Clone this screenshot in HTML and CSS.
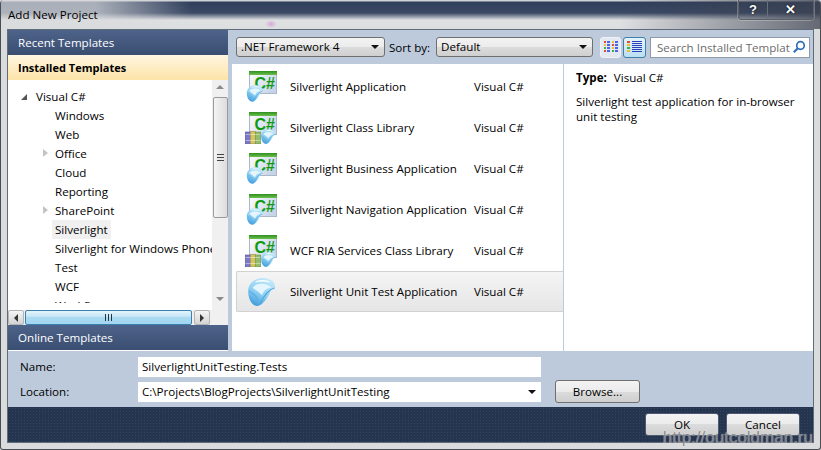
FILE: index.html

```html
<!DOCTYPE html>
<html lang="en">
<head>
    <meta charset="UTF-8">
    <title>Add New Project</title>
    <link rel="stylesheet" href="styles.css">
</head>
<body>
    <svg class="icon-defs" width="0" height="0">
        <defs>
            <linearGradient id="blob-fill" x1="0.7" y1="0" x2="0.2" y2="1">
                <stop offset="0" stop-color="#c4e9fa"/>
                <stop offset="0.55" stop-color="#8ccff1"/>
                <stop offset="1" stop-color="#3a98dc"/>
            </linearGradient>
            <linearGradient id="win-fill" x1="0" y1="0" x2="1" y2="0.6">
                <stop offset="0" stop-color="#ffffff"/>
                <stop offset="1" stop-color="#c6d4ea"/>
            </linearGradient>
            <linearGradient id="win-bar" x1="0" y1="0" x2="0" y2="1">
                <stop offset="0" stop-color="#2f8f22"/>
                <stop offset="1" stop-color="#6cc04c"/>
            </linearGradient>
            <symbol id="blob" viewBox="0 0 30 30">
                <path d="M2 14C2 6 10 1 18 2c6 1 10 4 9 8l-3 2c-2 6-7 14-12 16C6 29 2 22 2 14z" fill="url(#blob-fill)"/>
                <path d="M6 11c4-5 13-5 18 0-4 0-7 2-9 7-3-3-6-5-9-7z" fill="#e4f5fd"/>
                <path d="M8 6c4-3 11-3 15 0-5-1-10-1-15 0z" fill="#ffffff"/>
                <path d="M3 14c4 2 8 6 10 13" fill="none" stroke="#5aaee4" stroke-width="1"/>
                <path d="M13 26c3-6 7-13 14-15" fill="none" stroke="#4aa4e0" stroke-width="1"/>
            </symbol>
            <symbol id="window" viewBox="0 0 28 23">
                <rect x="0.5" y="0.5" width="27" height="22" fill="url(#win-fill)" stroke="#a9b7c9"/>
                <rect x="0" y="0" width="28" height="4" fill="url(#win-bar)"/>
                <text x="26" y="18" class="icon-cs" text-anchor="end">C#</text>
            </symbol>
            <symbol id="books" viewBox="0 0 16 13">
                <rect x="0.3" y="1" width="5" height="11.7" fill="#7a78c8" stroke="#55539c" stroke-width="0.6"/>
                <rect x="5.5" y="0.3" width="5" height="12.4" fill="#d4c560" stroke="#a39440" stroke-width="0.6"/>
                <rect x="10.7" y="1" width="5" height="11.7" fill="#93bd6c" stroke="#6a9448" stroke-width="0.6"/>
                <path d="M0.5 3.5h15M0.5 9.5h15" stroke="#ffffff" stroke-width="0.7" opacity="0.6"/>
            </symbol>
            <symbol id="app-icon" viewBox="0 0 34 34">
                <use href="#window" x="5" y="1" width="28" height="23"/>
                <use href="#blob" x="1" y="14" width="20" height="19"/>
            </symbol>
            <symbol id="lib-icon" viewBox="0 0 34 34">
                <use href="#window" x="5" y="1" width="28" height="23"/>
                <use href="#books" x="1" y="20" width="16" height="13"/>
                <use href="#blob" x="16" y="17" width="17" height="17"/>
            </symbol>
            <symbol id="view-grid" viewBox="0 0 14 14">
                <path d="M0 1h2v2H0z" fill="#e8483a"/>
                <path d="M0 4h2v2H0z" fill="#eec030"/>
                <path d="M0 7h2v2H0z" fill="#45b045"/>
                <path d="M0 10h2v2H0z" fill="#e8483a"/>
                <path d="M3 1h3v2H3zM3 4h3v2H3zM3 7h3v2H3zM3 10h3v2H3z" fill="#4a66e0"/>
                <path d="M8 1h2v2H8z" fill="#eec030"/>
                <path d="M8 4h2v2H8z" fill="#e8483a"/>
                <path d="M8 7h2v2H8z" fill="#eec030"/>
                <path d="M8 10h2v2H8z" fill="#45b045"/>
                <path d="M11 1h3v2h-3zM11 4h3v2h-3zM11 7h3v2h-3zM11 10h3v2h-3z" fill="#4a66e0"/>
            </symbol>
            <symbol id="view-list" viewBox="0 0 16 14">
                <path d="M0 1h3v2H0z" fill="#e8483a"/>
                <path d="M0 4h3v2H0z" fill="#eec030"/>
                <path d="M0 7h3v2H0z" fill="#45b045"/>
                <path d="M0 10h3v2H0z" fill="#eec030"/>
                <path d="M5 1h10v1H5zM5 3h10v1H5zM5 5h10v1H5zM5 7h10v1H5zM5 9h10v1H5zM5 11h10v1H5z" fill="#2a3fb8"/>
            </symbol>
        </defs>
    </svg>

    <div class="window">
        <header class="titlebar">
            <span class="title-text">Add New Project</span>
            <div class="caption-btns">
                <span class="caption-btn">?</span>
                <span class="caption-btn">✕</span>
            </div>
        </header>

        <div class="client">
            <div class="main">
                <aside class="sidebar">
                    <div class="side-head">Recent Templates</div>
                    <div class="side-head side-head-active">Installed Templates</div>
                    <div class="tree-wrap">
                        <ul class="tree">
                            <li class="tree-root"><i class="arrow-open"></i>Visual C#</li>
                            <li>Windows</li>
                            <li>Web</li>
                            <li><i class="arrow-closed"></i>Office</li>
                            <li>Cloud</li>
                            <li>Reporting</li>
                            <li><i class="arrow-closed"></i>SharePoint</li>
                            <li><span class="tree-sel">Silverlight</span></li>
                            <li>Silverlight for Windows Phone</li>
                            <li>Test</li>
                            <li>WCF</li>
                            <li>Workflow</li>
                        </ul>
                        <div class="vscroll">
                            <i class="tri-up"></i>
                            <div class="vthumb"><span class="grip-h"></span></div>
                            <i class="tri-down"></i>
                        </div>
                    </div>
                    <div class="hscroll">
                        <span class="hbtn"><i class="tri-left"></i></span>
                        <div class="hthumb"><span class="grip-v"></span></div>
                        <span class="hbtn"><i class="tri-right"></i></span>
                    </div>
                    <div class="side-head">Online Templates</div>
                </aside>

                <section class="content">
                    <div class="toolbar">
                        <div class="combo combo-fw">.NET Framework 4<i class="tri-combo"></i></div>
                        <span class="sort-label">Sort by:</span>
                        <div class="combo combo-sort">Default<i class="tri-combo"></i></div>
                        <span class="view-btn"><svg width="14" height="14"><use href="#view-grid"/></svg></span>
                        <span class="view-btn view-btn-on"><svg width="16" height="14"><use href="#view-list"/></svg></span>
                        <div class="search">
                            <span class="search-text">Search Installed Templat</span>
                            <svg class="search-icon" width="14" height="14" viewBox="0 0 14 14">
                                <circle cx="8.5" cy="5.5" r="3.8" fill="none" stroke="#2f6fb8" stroke-width="1.7"/>
                                <path d="M5.8 8.3 1.8 12.3" stroke="#2f6fb8" stroke-width="2.2"/>
                            </svg>
                        </div>
                    </div>

                    <div class="panes">
                        <div class="list">
                            <div class="row">
                                <svg class="row-icon"><use href="#app-icon"/></svg>
                                <span class="row-name">Silverlight Application</span>
                                <span class="row-lang">Visual C#</span>
                            </div>
                            <div class="row">
                                <svg class="row-icon"><use href="#lib-icon"/></svg>
                                <span class="row-name">Silverlight Class Library</span>
                                <span class="row-lang">Visual C#</span>
                            </div>
                            <div class="row">
                                <svg class="row-icon"><use href="#app-icon"/></svg>
                                <span class="row-name">Silverlight Business Application</span>
                                <span class="row-lang">Visual C#</span>
                            </div>
                            <div class="row">
                                <svg class="row-icon"><use href="#app-icon"/></svg>
                                <span class="row-name">Silverlight Navigation Application</span>
                                <span class="row-lang">Visual C#</span>
                            </div>
                            <div class="row">
                                <svg class="row-icon"><use href="#lib-icon"/></svg>
                                <span class="row-name">WCF RIA Services Class Library</span>
                                <span class="row-lang">Visual C#</span>
                            </div>
                            <div class="row row-sel">
                                <svg class="row-icon"><use href="#blob"/></svg>
                                <span class="row-name">Silverlight Unit Test Application</span>
                                <span class="row-lang">Visual C#</span>
                            </div>
                        </div>
                        <div class="details">
                            <p class="type-line"><b>Type:</b> Visual C#</p>
                            <p class="desc">Silverlight test application for in-browser unit testing</p>
                        </div>
                    </div>
                </section>
            </div>

            <form class="form">
                <label class="form-label">Name:</label>
                <div class="field">SilverlightUnitTesting.Tests</div>
                <span></span>
                <label class="form-label">Location:</label>
                <div class="field field-combo">C:\Projects\BlogProjects\SilverlightUnitTesting<i class="tri-combo"></i></div>
                <button type="button" class="btn btn-browse">Browse...</button>
            </form>

            <footer class="footer">
                <button type="button" class="btn btn-foot">OK</button>
                <button type="button" class="btn btn-foot">Cancel</button>
            </footer>
        </div>

        <span class="watermark">http://outcoldman.ru</span>
    </div>
</body>
</html>
```

FILE: styles.css

```css
body {
    margin: 0;
    padding: 0;
    font-family: "Open Sans", "Noto Sans", sans-serif;
    font-size: 11.6px;
    color: #000;
    background: #d8dadc;
}

.icon-defs {
    position: absolute;
}

.icon-cs {
    font-family: "Liberation Sans", sans-serif;
    font-weight: bold;
    font-size: 16px;
    fill: #109a10;
}

.window {
    position: relative;
    width: 821px;
    height: 450px;
    box-sizing: border-box;
    padding: 0 6px 6px 6px;
    background: #d9dbdd;
    border: 1px solid #4a4d52;
    border-top: none;
    border-radius: 4px 4px 3px 3px;
    margin: 0;
    overflow: hidden;
    display: flex;
    flex-direction: column;
}

.titlebar {
    height: 29px;
    flex: none;
    margin: 0 -6px;
    padding: 0 6px 0 7px;
    display: flex;
    justify-content: space-between;
    background:
        radial-gradient(ellipse 6px 4px at 270px 24px, #d6a8d8, transparent),
        linear-gradient(to right, rgba(216, 218, 220, 0.72) 0, rgba(216, 218, 220, 0.72) 95px, transparent 190px),
        linear-gradient(to left, rgba(60, 66, 80, 0.75) 0, transparent 200px),
        linear-gradient(to bottom, #cfd2d6 0, #cfd2d6 1px, #2f3e5b 2px, #3c4a66 13px, #dfe0e2 20px, #dcdee0 100%);
}

.title-text {
    line-height: 29px;
}

.caption-btns {
    display: flex;
    height: 19px;
    border: 1px solid #5b6068;
    border-top: none;
    border-radius: 0 0 4px 4px;
    box-shadow: 0 0 0 1px rgba(255, 255, 255, 0.25);
}

.caption-btn {
    width: 28px;
    text-align: center;
    color: #fff;
    font-family: "Liberation Sans", sans-serif;
    font-weight: bold;
    font-size: 13px;
    line-height: 19px;
    text-shadow: 0 0 2px #000;
}

.caption-btn:last-child {
    width: 45px;
    border-left: 1px solid #6a6f78;
}

.client {
    flex: 1;
    border: 1px solid #5f6b78;
    background: #bccadb;
    display: flex;
    flex-direction: column;
    min-height: 0;
}

.main {
    height: 321px;
    flex: none;
    display: flex;
}

.sidebar {
    width: 220px;
    height: 320px;
    flex: none;
    display: flex;
    flex-direction: column;
    background: #fff;
    border-bottom: 1px solid #fff;
}

.side-head {
    height: 25px;
    flex: none;
    box-sizing: border-box;
    padding-left: 10px;
    line-height: 25px;
    color: #fff;
    background: linear-gradient(to bottom, #4e6389, #3a4e72);
}

.side-head-active {
    color: #000;
    font-weight: bold;
    font-size: 11px;
    background: linear-gradient(to bottom, #fff6e0, #fde3a8);
}

.tree-wrap {
    flex: 1;
    display: flex;
    min-height: 0;
}

.tree {
    flex: 1;
    list-style: none;
    margin: 0;
    padding: 7px 0 0 0;
    height: 223px;
    box-sizing: border-box;
    overflow: hidden;
    white-space: nowrap;
}

.tree li {
    position: relative;
    height: 19px;
    line-height: 19px;
    padding-left: 47px;
}

.tree .tree-root {
    padding-left: 28px;
}

.tree-sel {
    display: inline-block;
    margin-left: -3px;
    padding: 0 3px;
    background: #f0f0f0;
}

.arrow-open {
    position: absolute;
    left: 13px;
    top: 7px;
    border-left: 6px solid transparent;
    border-bottom: 6px solid #555;
}

.arrow-closed {
    position: absolute;
    left: 35px;
    top: 5px;
    border-top: 4px solid transparent;
    border-bottom: 4px solid transparent;
    border-left: 5px solid #c4c4c4;
}

.vscroll {
    width: 16px;
    flex: none;
    background: #f0f0f0;
    display: flex;
    flex-direction: column;
    align-items: center;
    box-sizing: border-box;
    padding-top: 5px;
}

.tri-up {
    border-left: 4px solid transparent;
    border-right: 4px solid transparent;
    border-bottom: 4px solid #8a8a8a;
}

.tri-down {
    margin-top: 79px;
    border-left: 4px solid transparent;
    border-right: 4px solid transparent;
    border-top: 4px solid #8a8a8a;
}

.vthumb {
    width: 15px;
    height: 121px;
    box-sizing: border-box;
    margin-top: 8px;
    border: 1px solid #9a9a9a;
    border-radius: 2px;
    background: linear-gradient(to right, #f4f4f4, #dcdcdc);
    display: flex;
    align-items: center;
    justify-content: center;
}

.grip-h {
    width: 7px;
    height: 7px;
    background: repeating-linear-gradient(to bottom, #444 0, #444 1px, #e8e8e8 1px, #e8e8e8 3px);
}

.hscroll {
    height: 15px;
    flex: none;
    display: flex;
    align-items: stretch;
    background: #f0f0f0;
    padding-right: 18px;
}

.hbtn {
    width: 16px;
    flex: none;
    box-sizing: border-box;
    display: flex;
    align-items: center;
    justify-content: center;
    border: 1px solid #b4b4b4;
    border-radius: 2px;
    background: linear-gradient(to bottom, #f4f4f4, #d4d4d4);
}

.tri-left {
    border-top: 4px solid transparent;
    border-bottom: 4px solid transparent;
    border-right: 4px solid #333;
}

.tri-right {
    border-top: 4px solid transparent;
    border-bottom: 4px solid transparent;
    border-left: 4px solid #333;
}

.hthumb {
    flex: 1;
    margin: 0 2px 0 1px;
    border: 1px solid #3c7fb1;
    border-radius: 2px;
    background: linear-gradient(to bottom, #e3f4fc 0, #c4e5f6 45%, #a9daf2 50%, #a2d6f0 100%);
    display: flex;
    align-items: center;
    justify-content: center;
}

.grip-v {
    width: 7px;
    height: 7px;
    background: repeating-linear-gradient(to right, #234 0, #234 1px, transparent 1px, transparent 3px);
}

.content {
    flex: 1;
    margin-left: 4px;
    display: flex;
    flex-direction: column;
    min-width: 0;
}

.toolbar {
    height: 34px;
    flex: none;
    display: flex;
    align-items: center;
    box-sizing: border-box;
    padding: 0 0 0 4px;
}

.combo {
    position: relative;
    box-sizing: border-box;
    height: 20px;
    line-height: 18px;
    padding-left: 4px;
    border: 1px solid #707070;
    border-radius: 3px;
    background: linear-gradient(to bottom, #f3f3f3 0, #ebebeb 50%, #dcdcdc 50%, #cfcfcf 100%);
}

.combo-fw {
    width: 149px;
}

.combo-sort {
    width: 157px;
}

.sort-label {
    width: 51px;
    padding-left: 4px;
    box-sizing: border-box;
}

.tri-combo {
    position: absolute;
    right: 5px;
    top: 7px;
    border-left: 4px solid transparent;
    border-right: 4px solid transparent;
    border-top: 4px solid #111;
}

.view-btn {
    width: 21px;
    height: 21px;
    box-sizing: border-box;
    margin-left: 7px;
    display: flex;
    align-items: center;
    justify-content: center;
    background: #e4e9f1;
    border: 1px solid #eef2f6;
    border-radius: 3px;
}

.view-btn-on {
    width: 23px;
    margin-left: 2px;
    border-color: #3f7fa8;
    background: linear-gradient(to bottom, #e4f3fb, #b9dff4);
}

.search {
    width: 160px;
    height: 21px;
    box-sizing: border-box;
    margin-left: 4px;
    padding-left: 6px;
    display: flex;
    align-items: center;
    justify-content: space-between;
    background: #fff;
    border: 1px solid #8e9aaa;
    overflow: hidden;
}

.search-text {
    color: #6d6d6d;
    white-space: nowrap;
}

.search-icon {
    flex: none;
    margin-right: 3px;
}

.panes {
    flex: 1;
    display: flex;
    background: #fff;
    min-height: 0;
}

.list {
    width: 332px;
    flex: none;
    box-sizing: border-box;
    padding: 2px 0 0 4px;
    border-right: 1px solid #bccadb;
}

.row {
    height: 41px;
    box-sizing: border-box;
    display: flex;
    align-items: center;
    padding-left: 8px;
    white-space: nowrap;
}

.row-icon {
    width: 34px;
    height: 34px;
    flex: none;
}

.row-name {
    width: 184px;
    margin-left: 12px;
    flex: none;
}

.row-sel {
    background: linear-gradient(to bottom, #f4f4f4, #e6e6e6);
    border: 1px solid #d2d2d2;
    border-right: none;
    border-radius: 2px 0 0 2px;
    padding-left: 7px;
}

.row-sel .row-icon {
    width: 32px;
    height: 32px;
    margin-left: 2px;
}

.details {
    flex: 1;
    padding: 6px 12px;
}

.details p {
    margin: 0;
    line-height: 15px;
}

.type-line b {
    margin-right: 4px;
}

.desc {
    margin-top: 9px !important;
}

.form {
    height: 56px;
    flex: none;
    box-sizing: border-box;
    padding: 6px 0 0 12px;
    display: grid;
    grid-template-columns: 118px 403px auto;
    grid-template-rows: 20px 21px;
    row-gap: 4px;
    align-items: center;
}

.form-label {
    line-height: 20px;
}

.field {
    position: relative;
    height: 20px;
    box-sizing: border-box;
    padding-left: 4px;
    line-height: 20px;
    background: #fff;
    white-space: nowrap;
}

.field-combo .tri-combo {
    top: 8px;
}

.btn {
    font: inherit;
    box-sizing: border-box;
    border: 1px solid #707070;
    border-radius: 3px;
    background: linear-gradient(to bottom, #f3f3f3 0, #ebebeb 50%, #dcdcdc 50%, #cfcfcf 100%);
    padding: 0;
}

.btn-browse {
    width: 85px;
    height: 23px;
    margin-left: 14px;
}

.footer {
    flex: 1;
    display: flex;
    align-items: flex-start;
    justify-content: flex-end;
    gap: 7px;
    box-sizing: border-box;
    padding: 6px 13px 0 0;
    background-color: #25344f;
    background-image: radial-gradient(#34455f 0.7px, transparent 0.8px);
    background-size: 3px 3px;
}

.btn-foot {
    width: 74px;
    height: 23px;
    border-color: #4d5a70;
}

.watermark {
    position: absolute;
    right: 7px;
    bottom: 2px;
    font-family: "Liberation Sans", sans-serif;
    font-size: 17px;
    line-height: 18px;
    color: rgba(125, 128, 130, 0.9);
    text-shadow: 0 0 1px rgba(255, 255, 255, 0.7);
}
```
